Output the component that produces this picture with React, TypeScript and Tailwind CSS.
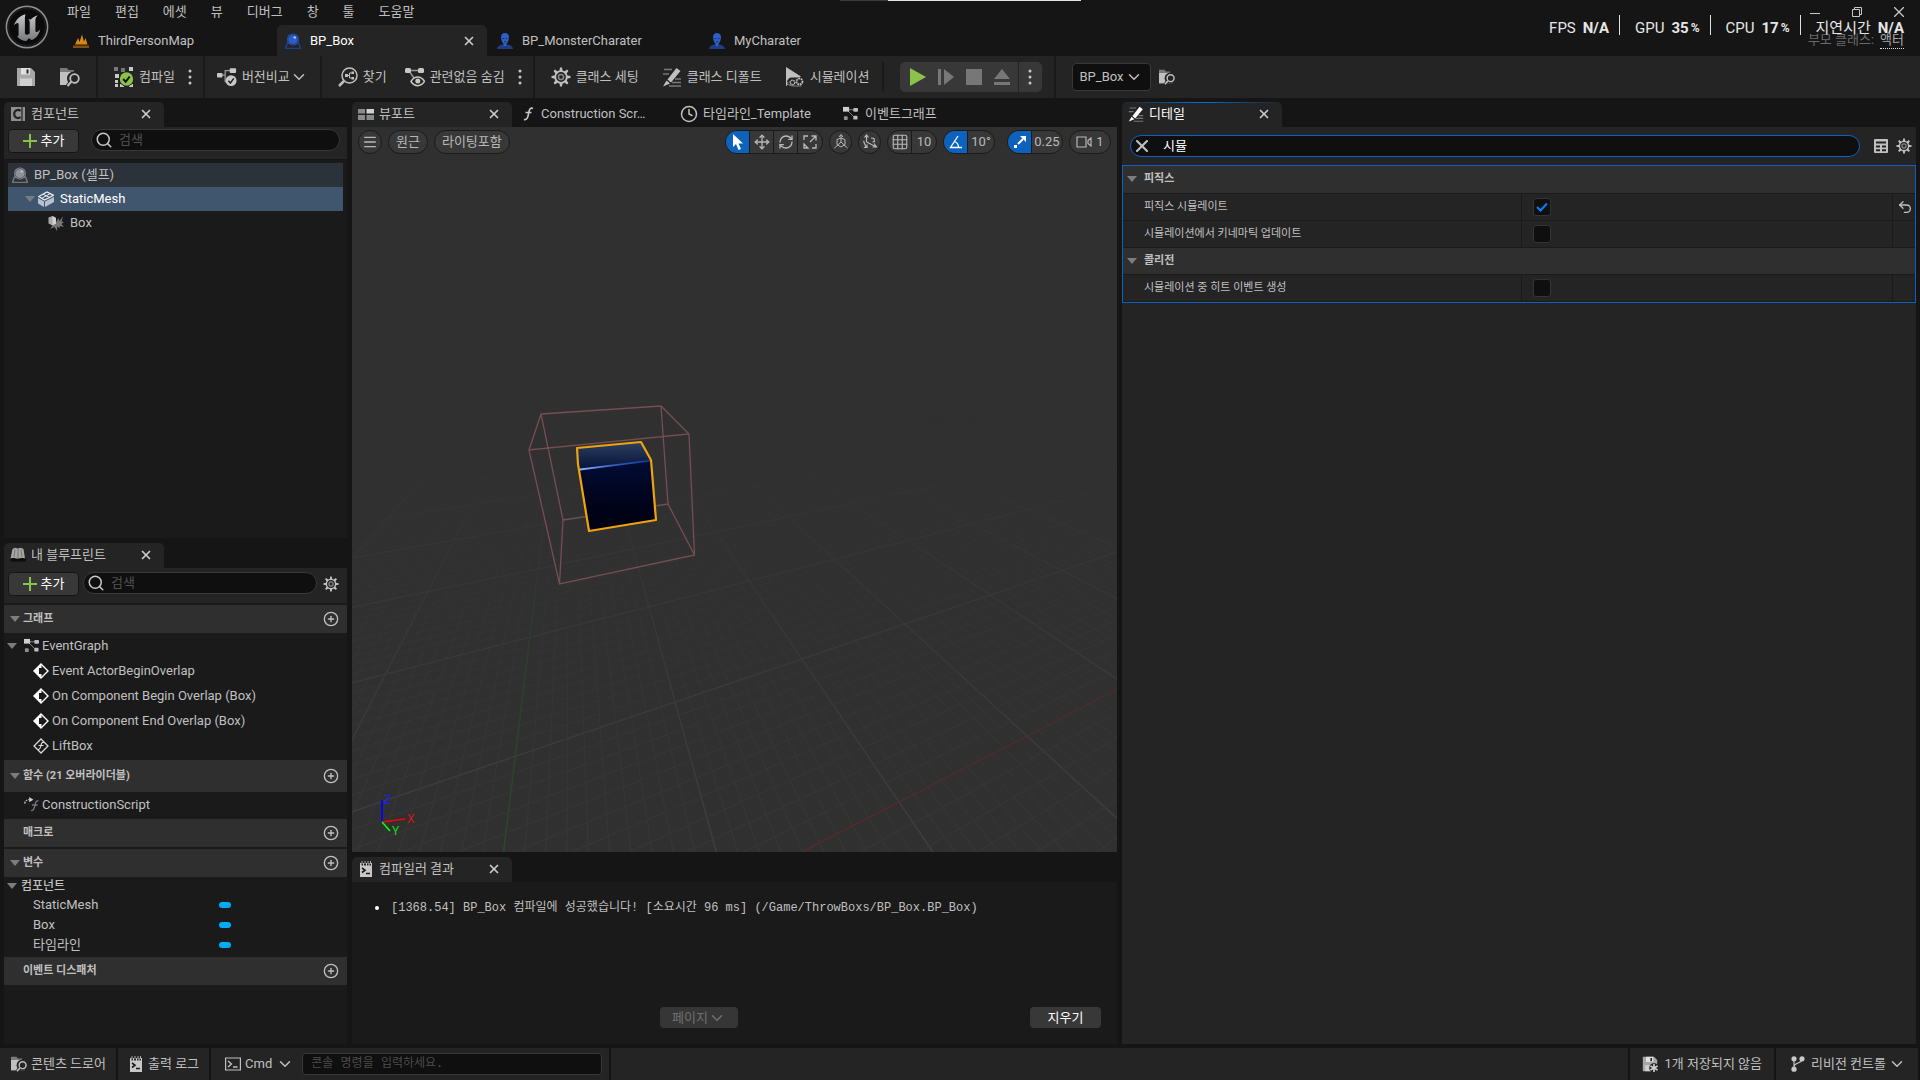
import { useState } from "react"
import type { ReactNode } from "react"
import clsx from "clsx"
import { ChevronDown, CirclePlus, Clock, Grid3x3, Menu, Move, RefreshCw, Search, Undo2, X } from "lucide-react"

type IconProps = { className?: string }

/* ---------- icons ---------- */

function UnrealLogo() {
  return (
    <svg viewBox="0 0 44 44" className="size-11">
      <defs>
        <linearGradient id="ueFill" x1="0" y1="0" x2="0" y2="1">
          <stop offset="0" stopColor="#c4c6c8" />
          <stop offset="1" stopColor="#77797b" />
        </linearGradient>
      </defs>
      <circle cx="22" cy="22" r="20.6" fill="#0b0b0b" stroke="#8b8d8f" strokeWidth="1.6" />
      <circle cx="22" cy="22" r="18.5" fill="none" stroke="#1c1c1c" strokeWidth="1.5" />
      <path
        fill="url(#ueFill)"
        d="M20.5 9.3c-4.600 1-9.400 4.800-11.700 11.200 1.400-1.700 3.300-2.700 4.200-2.300.6.3.6 1 .6 2v9.300c0 1-.5 1.600-1.300 1.900 2.300 3 6.100 4.600 9 4.500l2.600-2.700 2.700 1.900c4.200-1.700 7.300-5.500 8.600-10.700-1.400 1.500-2.900 2.700-3.900 2.600-.8-.1-.9-.8-.9-1.700V14.900c0-1.600 1-3.300 2.600-4.600-2.900.7-5.500 2.200-7.600 4.500-.7-.5-1.300-.6-2.200-.5 1 .6 1.500 1.500 1.500 2.800v11.300c-1 .9-2 1.300-3 1.300-1.200 0-1.800-.6-1.800-1.900V14.600c-.1-1.700.2-3.800.6-5.300Z"
      />
    </svg>
  )
}

function MapIcon({ className }: IconProps) {
  return (
    <svg viewBox="0 0 16 16" className={className}>
      <path d="M2 11.500 5 5l1.500 4L9 1.500l2 7L12.500 5l2 6.500Z" fill="#d98a12" />
      <rect x="0" y="12.500" width="16" height="2.500" fill="#80500c" />
    </svg>
  )
}

function BlueprintIcon({ className, tone = "blue" }: IconProps & { tone?: "blue" | "gray" }) {
  const [ball, base] = tone === "blue" ? ["#2c5cc5", "#1d3f86"] : ["#8d9196", "#70757a"]
  return (
    <svg viewBox="0 0 16 16" className={className}>
      <path d="M2.500 10 0.500 15.500h15l-2-5.500Z" fill="none" stroke={base} strokeWidth="1.600" />
      <circle cx="8" cy="6.500" r="6" fill={ball} />
      <circle cx="8" cy="6.500" r="5" fill="none" stroke="#00000055" />
      <circle cx="9.800" cy="4.500" r="1.300" fill="#a9c1f5" />
    </svg>
  )
}

function CharacterIcon({ className }: IconProps) {
  return (
    <svg viewBox="0 0 16 16" className={className}>
      <path d="M0 16c.3-3 2.500-4 5.500-4.600h5c3 .6 5.200 1.600 5.500 4.600Z" fill="#1f3d82" />
      <path d="M8 0c2.600 0 4 1.800 4 4.300 0 3-1.500 5.700-2.500 6.500V13h-3v-2.200C5.500 10 4 7.300 4 4.300 4 1.800 5.400 0 8 0Z" fill="#2f5fc6" />
      <path d="M5.500 5.500h1.700M8.800 5.500h1.700M7 8.700h2" stroke="#16306b" />
    </svg>
  )
}

function SaveIcon({ className, star }: IconProps & { star?: boolean }) {
  return (
    <svg viewBox="0 0 20 20" className={className}>
      <path d="M1 1h14l4 4v14H1Z" fill="#a8a8a8" />
      <path d="M5 1h9v6.500H5Z" fill="#e0e0e0" />
      <path d="M10.500 2.500h2v4h-2Z" fill="#242424" />
      <path d="M4 11.500h12V19H4Z" fill="#d0d0d0" />
      {star && (
        <>
          <circle cx="15" cy="15" r="6" fill="#242424" />
          <path d="M15 10v10M10.500 12.500l9 5M19.500 12.500l-9 5" stroke="#d0d0d0" strokeWidth="2" />
        </>
      )}
    </svg>
  )
}

function BrowseIcon({ className }: IconProps) {
  return (
    <svg viewBox="0 0 20 20" className={className}>
      <path d="M0 1h7l1.500 2H14v2H0Z" fill="#7a7a7a" />
      <path d="M0 5h17v13H0Z" fill="#c0c0c0" />
      <circle cx="14" cy="11.500" r="7" fill="#242424" />
      <circle cx="14.500" cy="11.500" r="4.300" fill="none" stroke="#c0c0c0" strokeWidth="1.800" />
      <path d="m11.500 15-4 4" stroke="#242424" strokeWidth="4" />
      <path d="m11.500 14.500-4 4.500" stroke="#c0c0c0" strokeWidth="2" />
    </svg>
  )
}

function CompileIcon({ className }: IconProps) {
  return (
    <svg viewBox="0 0 20 20" className={className}>
      <path d="M0 0h4v4H0ZM7 1h4v4H7Z" fill="#777" />
      <path d="M15 0h4v4h-4ZM1 7h4v4H1ZM1 13h3v3H1ZM6 17h4v3H6ZM1 17h3v3H1ZM15 17h4v3h-4ZM7 7h4v4H7Z" fill="#c8c8c8" />
      <circle cx="12.500" cy="12" r="7.500" fill="#1b1b1b" />
      <circle cx="12.500" cy="12" r="6.700" fill="#8bc24a" />
      <path d="m9.200 12 2.500 2.800 4-5.300" fill="none" stroke="#111" strokeWidth="2" />
    </svg>
  )
}

function DiffIcon({ className }: IconProps) {
  return (
    <svg viewBox="0 0 22 20" className={className}>
      <path d="M5 8h4V3h6M9 8v7h3" fill="none" stroke="#9a9a9a" strokeWidth="1.400" />
      <rect x="0" y="5.500" width="6" height="5" rx="1" fill="#c8c8c8" />
      <rect x="14" y="0.500" width="7" height="5" rx="1" fill="#c8c8c8" />
      <circle cx="15.500" cy="14" r="6" fill="#c8c8c8" />
      <path d="m12.500 14 2.200 2.500 3.800-5" fill="none" stroke="#222" strokeWidth="1.700" />
    </svg>
  )
}

function FindIcon({ className }: IconProps) {
  return (
    <svg viewBox="0 0 20 20" className={className} fill="none" stroke="#c0c0c0">
      <circle cx="11.500" cy="8.500" r="7.500" strokeWidth="1.500" />
      <path d="m6 14-5 5" strokeWidth="2.500" />
      <path d="M9 8.500h2.500V6H14M11.500 8.500V11H14" />
      <path d="M7 7h3v3H7ZM13.500 4.500h2.500v2.500h-2.500ZM13.500 10h2.500v2.500h-2.500Z" fill="#c0c0c0" stroke="none" />
    </svg>
  )
}

function HideIcon({ className }: IconProps) {
  return (
    <svg viewBox="0 0 20 20" className={className}>
      <path d="M4 3.500h12M4 4l5 7" stroke="#999" strokeWidth="1.300" />
      <rect x="0" y="1" width="6" height="5" rx="1.500" fill="#c8c8c8" />
      <rect x="13" y="1" width="6" height="5" rx="1.500" fill="#c8c8c8" />
      <path d="M6 14.500c3.500-6 10-6 13.500 0-3.500 5.500-10 5.500-13.500 0Z" fill="#242424" stroke="#c8c8c8" strokeWidth="1.500" />
      <circle cx="12.800" cy="14" r="2.500" fill="#c8c8c8" />
    </svg>
  )
}

function GearIcon({ className }: IconProps) {
  const teeth = [0, 45, 90, 135, 180, 225, 270, 315]
  return (
    <svg viewBox="0 0 20 20" className={className}>
      {teeth.map((a) => (
        <path key={a} d="M8.300 4.500 9 0.500h2l.7 4Z" fill="#c0c0c0" transform={`rotate(${a} 10 10)`} />
      ))}
      <circle cx="10" cy="10" r="5.800" fill="none" stroke="#c0c0c0" strokeWidth="1.800" />
      <circle cx="10" cy="10" r="2.600" fill="none" stroke="#8a8a8a" strokeWidth="1.500" />
    </svg>
  )
}

function PencilIcon({ className }: IconProps) {
  return (
    <svg viewBox="0 0 20 20" className={className}>
      <path d="M2 2.500h8M1 7h6M13 12h6M10 15.500h9M7 19h12" stroke="#777" strokeWidth="1.400" />
      <path d="m14.500 1 4 3-9.500 11.500-3.500-3Z" fill="currentColor" />
      <path d="m4.500 13.500 3.500 3L1 19.500Z" fill="currentColor" />
    </svg>
  )
}

function SimulateIcon({ className }: IconProps) {
  return (
    <svg viewBox="0 0 20 20" className={className}>
      <path d="M1 0 16 9.500 1 19Z" fill="#c0c0c0" />
      <rect x="2" y="10.500" width="18" height="9.500" rx="4.700" fill="#242424" />
      <circle cx="7.500" cy="15.500" r="2.300" fill="none" stroke="#c0c0c0" strokeWidth="1.400" strokeDasharray="1.500 .6" />
      <circle cx="14.500" cy="14.500" r="3" fill="none" stroke="#c0c0c0" strokeWidth="1.800" strokeDasharray="1.800 .7" />
      <path d="M2.500 15c.5 5 7 4 14 4" fill="none" stroke="#888" />
    </svg>
  )
}

function ViewportIcon({ className }: IconProps) {
  return (
    <svg viewBox="0 0 16 16" className={className}>
      <path d="M0 3h7v4.500H0ZM0 9h7v5H0ZM8.500 9H16v5H8.500Z" fill="#8a8a8a" />
      <path d="M8.500 3H16v4.500H8.500Z" fill="#d0d0d0" />
    </svg>
  )
}

function GraphIcon({ className }: IconProps) {
  return (
    <svg viewBox="0 0 16 16" className={className}>
      <path d="M4 4h9M4 4l8 8" stroke="#888" />
      <path d="M0 1h6.500v5H0Z" fill="#d0d0d0" />
      <rect x="11" y="2" width="5" height="4" rx="1" fill="#bdbdbd" />
      <rect x="11" y="10.500" width="4.500" height="4" rx="1" fill="#bdbdbd" />
      <rect x="1" y="11" width="4" height="4" rx="1" fill="#8f8f8f" />
    </svg>
  )
}

function ComponentsIcon({ className }: IconProps) {
  return (
    <svg viewBox="0 0 14 14" className={className}>
      <path d="M0 0h14v14H0Z" fill="#8f8f8f" />
      <path d="M9.500 4C7.500 2 3.200 3 3.200 7s4.300 5 6.300 3" fill="none" stroke="#242424" strokeWidth="2.200" />
      <path d="M11 0v14" stroke="#242424" strokeWidth="1.200" />
    </svg>
  )
}

function BookIcon({ className }: IconProps) {
  return (
    <svg viewBox="0 0 16 16" className={className}>
      <path d="m0 12 3-1.500L16 11v3.500H1Z" fill="#0d0d0d" />
      <path d="M2.500 2 5 .8l3 .7 3-.7 2.500 1.200L15 11.500c-2.500-.8-4.700-.6-7.500.3-2.500-.9-4.500-.9-7-.3Z" fill="#a5a5a5" />
      <path d="M5 2.500 4 10M8 1.500v9.500M11 2.500l1 7.500" stroke="#777" />
    </svg>
  )
}

function LogIcon({ className }: IconProps) {
  return (
    <svg viewBox="0 0 12 16" className={className}>
      <path d="M0 2h1.500v2.500h1.500V2h1v2.500h2V2h1v2.500h1.500V2h1v2.500h1.500V2H12v14H0Z" fill="#c8c8c8" />
      <path d="M2 0v3M5 0v3M8 0v3M10.500 0v3" stroke="#aaa" />
      <path d="m2 7 3 2.200L2 11.500M6 12.500h4" fill="none" stroke="#1a1a1a" strokeWidth="1.600" />
    </svg>
  )
}

function CmdIcon({ className }: IconProps) {
  return (
    <svg viewBox="0 0 16 14" className={className} fill="none" stroke="#c0c0c0">
      <path d="M.6 1h14.800v12H.6Z" strokeWidth="1.200" />
      <path d="m3 4 3.500 3L3 10M8 10h4.500" strokeWidth="1.400" />
    </svg>
  )
}

function BranchIcon({ className }: IconProps) {
  return (
    <svg viewBox="0 0 14 16" className={className}>
      <path d="M3 3v10M11 3.500c0 4-8 3-8 7" fill="none" stroke="#c0c0c0" strokeWidth="1.200" />
      <circle cx="3" cy="2.800" r="2.600" fill="#c8c8c8" />
      <circle cx="11" cy="2.800" r="2.600" fill="#c8c8c8" />
      <circle cx="3" cy="13.200" r="2.600" fill="#c8c8c8" />
    </svg>
  )
}

function MeshIcon({ className }: IconProps) {
  return (
    <svg viewBox="0 0 16 16" className={className}>
      <path d="m0 7 6 3.500V16l-6-3.500ZM7 10.500 16 6v5l-9 5Z" fill="#b9c2cc" />
      <path d="M.8 5.500 9 1l6.500 3.300L6.500 9Z" fill="none" stroke="#e6ebf0" strokeWidth="1.300" />
      <path d="m5 3.300 6.500 3M3.500 7.500 12 2.700" stroke="#e6ebf0" />
    </svg>
  )
}

function BoxCollisionIcon({ className }: IconProps) {
  return (
    <svg viewBox="0 0 16 16" className={className}>
      <path d="m7 9 3.500-6 .8 3L15 1.500 13.500 6.500 16 7l-2.500 2L16 12l-4-1-.5 2.500L9.500 11 9 16l-2.500-4L2 14l3-4Z" fill="#777" />
      <path d="m.5 2.500 4-1.500 3.500 2v5.500L4.500 10.500l-4-2Z" fill="#a8a8a8" />
      <path d="M4.500 1 8 3v5.500l-3.500 2Z" fill="#d0d0d0" />
    </svg>
  )
}

function EventIcon({ className }: IconProps) {
  return (
    <svg viewBox="0 0 16 16" className={className}>
      <path d="M8 1 15 8 8 15 1 8Z" fill="none" stroke="#fff" strokeWidth="1.400" />
      <path d="M8.500 1v4H6v6h2.500v4L1 8Z" fill="#fff" />
      <path d="M6.500 8h5" stroke="#1a1a1a" strokeWidth="2.500" />
    </svg>
  )
}

function CustomEventIcon({ className }: IconProps) {
  return (
    <svg viewBox="0 0 16 16" className={className} fill="none" stroke="#d8d8d8">
      <path d="M8 1 15 8 8 15 1 8Z" strokeWidth="1.300" />
      <path d="M11 4.500c-2-.8-2.500.5-3 3S7 11.500 5 11.500M5.500 7.500h5" strokeWidth="1.200" />
    </svg>
  )
}

function FunctionIcon({ className, arrow }: IconProps & { arrow?: boolean }) {
  return (
    <svg viewBox="0 0 16 16" className={className} fill="none">
      {arrow ? (
        <>
          <path d="M15.500 4.500c-2-1-3 .3-3.500 3S10.500 15 7.500 14.500M8.500 8.500h6" stroke="#777" strokeWidth="1.500" />
          <path d="M.8 7C1.200 4 3 2.800 6 2.800" stroke="#d0d0d0" strokeWidth="1.300" strokeDasharray="2 1" />
          <path d="m5.500 0 4.500 2.800-4.500 2.700Z" fill="#d0d0d0" />
        </>
      ) : (
        <path d="M13 2.500c-2.500-1.200-3.600.5-4.200 4S7.500 14.500 4 13.500M5.500 6.500h6" stroke="#c8c8c8" strokeWidth="1.600" />
      )}
    </svg>
  )
}

function TableIcon({ className }: IconProps) {
  return (
    <svg viewBox="0 0 14 14" className={className}>
      <rect width="14" height="14" rx="1" fill="#c0c0c0" />
      <path d="M2 2.500h10v2H2ZM2 6.500h4v2H2ZM8 6.500h4v2H8ZM2 10.300h4v2H2ZM8 10.300h4v2H8Z" fill="#242424" />
    </svg>
  )
}

function Dots() {
  return (
    <svg viewBox="0 0 10 18" className="h-4.5 w-2.5" fill="#c8c8c8">
      <circle cx="5" cy="3" r="1.500" />
      <circle cx="5" cy="9" r="1.500" />
      <circle cx="5" cy="15" r="1.500" />
    </svg>
  )
}

function Caret({ className }: IconProps) {
  return (
    <svg viewBox="0 0 10 6" className={clsx("h-1.5 w-2.5 shrink-0", className)}>
      <path d="M0 0h10L5 6Z" fill="#7d7d7d" />
    </svg>
  )
}

function CloseX() {
  return (
    <button aria-label="닫기" className="grid size-4 place-items-center text-[#c8c8c8]">
      <X className="size-3.5" strokeWidth={3} />
    </button>
  )
}

/* ---------- shared parts ---------- */

function PanelTab({ icon, children, focused }: { icon: ReactNode; children: ReactNode; focused?: boolean }) {
  return (
    <div className={clsx("relative flex h-[25px] w-40 shrink-0 items-center overflow-hidden rounded-t-[5px] bg-[#242424] pr-2.5 pb-0.5 pl-1", focused && "text-white")}>
      {focused && <span className="absolute inset-x-0 top-0 h-px bg-linear-to-r from-transparent via-[#0070e0] to-transparent" />}
      <span className="grid w-5 shrink-0 place-items-center">{icon}</span>
      <span className="ml-[3px] flex-1">{children}</span>
      <CloseX />
    </div>
  )
}

function AddButton() {
  return (
    <button className="flex h-6 w-[71px] shrink-0 items-center justify-center gap-1 rounded-sm border border-[#151515] bg-[#383838] text-white">
      <svg viewBox="0 0 14 14" className="size-3.5"><path d="M7 0v14M0 7h14" stroke="#8bc24a" strokeWidth="2" /></svg>
      추가
    </button>
  )
}

function SearchBox({ label }: { label: string }) {
  return (
    <label className="flex h-[22px] min-w-0 flex-1 items-center rounded-full border border-[#383838] bg-[#0f0f0f] pl-[3px]">
      <Search className="size-[18px] shrink-0 text-[#c8c8c8]" />
      <span className="sr-only">{label}</span>
      <input placeholder="검색" className="ml-1.5 h-5 min-w-0 flex-1 bg-transparent leading-5 outline-none placeholder:text-[#505050]" />
    </label>
  )
}

function ToolButton({ icon, children }: { icon: ReactNode; children?: ReactNode }) {
  return <button className="flex items-center gap-[5px] whitespace-nowrap">{icon}{children}</button>
}

function Divider() {
  return <span className="w-0.5 shrink-0 self-stretch bg-[#1a1a1a]" />
}

/* ---------- title bar ---------- */

const MENUS = ["파일", "편집", "에셋", "뷰", "디버그", "창", "툴", "도움말"]

const DOCS = [
  { name: "ThirdPersonMap", icon: <MapIcon className="size-4" /> },
  { name: "BP_Box", icon: <BlueprintIcon className="size-4" />, active: true },
  { name: "BP_MonsterCharater", icon: <CharacterIcon className="size-4" /> },
  { name: "MyCharater", icon: <CharacterIcon className="size-4" /> },
]

function Stat({ label, value, unit, last }: { label: string; value: string; unit?: string; last?: boolean }) {
  return (
    <div className={clsx("flex h-5 items-center pt-1.5 pl-[15px]", last ? "" : "border-r border-[#e0e0e0] pr-2.5")}>
      <span>{label}</span>
      <b className="ml-[7px] font-bold">{value}</b>
      {unit && <b className="ml-0.5 text-[12px]">{unit}</b>}
    </div>
  )
}

function TitleBar() {
  return (
    <header className="relative flex h-14 shrink-0">
      <div className="absolute top-0 left-[840px] flex h-px w-[241px]">
        <span className="w-12 bg-[#3a3a3a]" />
        <span className="flex-1 bg-[#e4e4e4]" />
      </div>
      <div className="w-[65px] shrink-0 pt-[5px] pl-[5px]"><UnrealLogo /></div>
      <div className="flex-1">
        <nav className="flex h-[25px] items-center gap-6 pb-0.5 pl-0.5">
          {MENUS.map((m) => <button key={m}>{m}</button>)}
        </nav>
        <div className="flex h-[31px] gap-0.5">
          {DOCS.map((d) => (
            <div key={d.name} className={clsx("flex w-[210px] items-center gap-[9px] rounded-t-[5px] pr-2.5 pl-2", d.active && "bg-[#242424] text-white")}>
              {d.icon}
              <span className="flex-1">{d.name}</span>
              {d.active && <CloseX />}
            </div>
          ))}
        </div>
      </div>
      <div className="flex flex-col items-end pr-4">
        <div className="flex h-[23px] items-center gap-8 text-[#c8c8c8]">
          <button aria-label="최소화"><svg viewBox="0 0 10 10" className="size-2.5"><path d="M0 6.500h10" stroke="currentColor" /></svg></button>
          <button aria-label="이전 크기로"><svg viewBox="0 0 10 10" className="size-2.5" fill="none" stroke="currentColor"><path d="M.5 2.500h7v7h-7ZM2.500 2.500v-2h7v7h-2" /></svg></button>
          <button aria-label="닫기"><svg viewBox="0 0 10 10" className="size-2.5"><path d="m0 0 10 10M10 0 0 10" stroke="currentColor" strokeWidth="1.300" /></svg></button>
        </div>
        <div className="mt-2 flex h-[18px] items-center gap-1.5 text-[#6a6a6a]">
          부모 클래스:
          <a href="#actor" className="border-b border-dotted border-[#e0e0e0] leading-4 text-[#a8a8a8]">액터</a>
        </div>
      </div>
      <div className="absolute top-[15px] right-4 flex text-[15px] text-[#e6e6e6]">
        <Stat label="FPS" value="N/A" />
        <Stat label="GPU" value="35" unit="%" />
        <Stat label="CPU" value="17" unit="%" />
        <Stat label="지연시간" value="N/A" last />
      </div>
    </header>
  )
}

/* ---------- toolbar ---------- */

function Toolbar() {
  return (
    <div className="flex h-[42px] shrink-0 items-center bg-[#242424]">
      <div className="flex gap-6 px-4">
        <button aria-label="저장"><SaveIcon className="size-5" /></button>
        <button aria-label="찾아보기"><BrowseIcon className="size-5" /></button>
      </div>
      <Divider />
      <div className="flex items-center gap-2.5 pr-2 pl-4">
        <ToolButton icon={<CompileIcon className="size-5" />}>컴파일</ToolButton>
        <button aria-label="컴파일 옵션"><Dots /></button>
      </div>
      <Divider />
      <div className="flex items-center pr-3 pl-3">
        <ToolButton icon={<DiffIcon className="h-5 w-5" />}>버전비교</ToolButton>
        <ChevronDown className="size-[18px]" />
      </div>
      <Divider />
      <div className="flex items-center pr-2 pl-4">
        <ToolButton icon={<FindIcon className="size-5" />}>찾기</ToolButton>
        <span className="w-4.5" />
        <ToolButton icon={<HideIcon className="size-5" />}>관련없음 숨김</ToolButton>
        <span className="w-2.5" />
        <button aria-label="숨김 옵션"><Dots /></button>
      </div>
      <Divider />
      <div className="flex items-center gap-[23px] pr-3 pl-4">
        <ToolButton icon={<GearIcon className="size-5" />}>클래스 세팅</ToolButton>
        <ToolButton icon={<PencilIcon className="size-5" />}>클래스 디폴트</ToolButton>
        <ToolButton icon={<SimulateIcon className="size-5" />}>시뮬레이션</ToolButton>
      </div>
      <span className="h-[30px] w-0.5 bg-[#1a1a1a]" />
      <div className="mr-3 ml-4 flex h-[30px] items-stretch rounded-[5px] bg-[#383838] pl-1">
        <button aria-label="플레이" className="grid w-7 place-items-center"><svg viewBox="0 0 16 18" className="h-[18px] w-4"><path d="M0 0 16 9 0 18Z" fill="#8bc24a" /></svg></button>
        <button aria-label="프레임 건너뛰기" className="grid w-7 place-items-center"><svg viewBox="0 0 16 18" className="h-[18px] w-4" fill="#777"><path d="M0 1h3v16H0ZM6 1l10 8-10 8Z" /></svg></button>
        <button aria-label="중지" className="grid w-7 place-items-center"><span className="size-4 bg-[#777]" /></button>
        <button aria-label="꺼내기" className="grid w-7 place-items-center"><svg viewBox="0 0 16 16" className="size-4" fill="#777"><path d="m8 0 8 10H0ZM0 13h16v3H0Z" /></svg></button>
        <button aria-label="플레이 옵션" className="ml-0.5 grid w-6 place-items-center border-l border-[#242424]"><Dots /></button>
      </div>
      <Divider />
      <div className="ml-4 flex items-center gap-2">
        <label className="relative flex items-center">
          <span className="sr-only">디버그 오브젝트</span>
          <select className="h-7 w-[79px] appearance-none rounded-sm border border-[#383838] bg-[#0f0f0f] pl-[7px] leading-6">
            <option>BP_Box</option>
          </select>
          <ChevronDown className="pointer-events-none absolute right-2 size-[18px]" />
        </label>
        <button aria-label="오브젝트 찾기"><BrowseIcon className="size-4" /></button>
      </div>
    </div>
  )
}

/* ---------- left column ---------- */

function ComponentsPanel() {
  return (
    <section className="flex min-h-0 flex-[436] flex-col">
      <PanelTab icon={<ComponentsIcon className="size-3.5" />}>컴포넌트</PanelTab>
      <div className="flex h-8 shrink-0 items-start gap-3 bg-[#242424] px-1 pt-0.5 pr-[7px]">
        <AddButton />
        <SearchBox label="컴포넌트 검색" />
      </div>
      <ul className="flex-1 border-t border-[#151515] bg-[#1a1a1a] px-1 pt-[3px]">
        <li className="flex h-6 items-center gap-1.5 bg-[#2b323a] pl-1"><BlueprintIcon tone="gray" className="size-4" />BP_Box (셀프)</li>
        <li className="flex h-6 items-center bg-[#40566f] pl-[17px] text-white"><Caret /><MeshIcon className="mr-1.5 ml-[3px] size-4" />StaticMesh</li>
        <li className="flex h-6 items-center gap-1.5 pl-10"><BoxCollisionIcon className="size-4" />Box</li>
      </ul>
    </section>
  )
}

function SectionHeader({ children, open }: { children: ReactNode; open?: boolean }) {
  return (
    <div className="flex h-7 items-center bg-[#2f2f2f] pr-2 pl-1.5 text-[11px] font-bold">
      <span className="w-[13px]">{open && <Caret />}</span>
      <h3 className="flex-1">{children}</h3>
      <button aria-label="추가"><CirclePlus className="size-4" strokeWidth={2} /></button>
    </div>
  )
}

const EVENTS = ["Event ActorBeginOverlap", "On Component Begin Overlap (Box)", "On Component End Overlap (Box)"]
const VARIABLES = ["StaticMesh", "Box", "타임라인"]

function MyBlueprintPanel() {
  return (
    <section className="flex min-h-0 flex-[501] flex-col">
      <PanelTab icon={<BookIcon className="size-4" />}>내 블루프린트</PanelTab>
      <div className="flex h-[35px] shrink-0 items-start gap-1 bg-[#242424] px-1 pt-1">
        <AddButton />
        <SearchBox label="내 블루프린트 검색" />
        <button aria-label="설정" className="mt-1 mr-1 ml-0.5"><GearIcon className="size-4" /></button>
      </div>
      <div className="flex-1 overflow-hidden bg-[#1a1a1a] pt-0.5">
        <SectionHeader open>그래프</SectionHeader>
        <ul>
          <li className="flex h-[25px] items-center pl-[3px]"><Caret className="mr-[7px]" /><GraphIcon className="mr-[3px] size-[15px]" />EventGraph</li>
          {EVENTS.map((e) => (
            <li key={e} className="flex h-[25px] items-center gap-[3px] pl-[29px]"><EventIcon className="size-4" />{e}</li>
          ))}
          <li className="flex h-[25px] items-center gap-[3px] pl-[29px]"><CustomEventIcon className="size-4" />LiftBox</li>
        </ul>
        <div className="mt-0.5 bg-[#2f2f2f] py-0.5"><SectionHeader open>함수 (21 오버라이더블)</SectionHeader></div>
        <div className="flex h-[27px] items-center gap-[3px] pb-0.5 pl-5"><FunctionIcon arrow className="size-[15px]" />ConstructionScript</div>
        <SectionHeader>매크로</SectionHeader>
        <div className="mt-0.5"><SectionHeader open>변수</SectionHeader></div>
        <div className="flex h-[18px] items-center gap-1 pl-[3px] text-[12px] font-medium"><Caret />컴포넌트</div>
        <ul className="pb-0.5">
          {VARIABLES.map((v) => (
            <li key={v} className="flex h-5 items-center pl-[29px]">
              <span className="w-[186px]">{v}</span>
              <span className="h-1.5 w-3 rounded-[3px] bg-[#00aaf5]" />
            </li>
          ))}
        </ul>
        <SectionHeader>이벤트 디스패처</SectionHeader>
      </div>
    </section>
  )
}

/* ---------- viewport ---------- */

// projects a point of the ground plane; one unit is one major grid cell
function project(u: number, v: number) {
  const w = 1 + 0.1035 * u - 0.294 * v
  const x = (802 + 196.7 * u - 167.3 * v) / w
  const y = (659 + 29.6 * u - 92.8 * v) / w
  return { x: Math.round(x * 10) / 10, y: Math.round(y * 10) / 10 }
}

function gridLines() {
  const lines: { key: string; a: { x: number; y: number }; b: { x: number; y: number }; color: string; width: number }[] = []
  for (let i = -40; i <= 40; i++) {
    const major = i % 10 === 0
    const color = i === -20 ? "#2b4a2d" : major ? "#3f3f3f" : "#383838"
    lines.push({ key: `u${i}`, a: project(i / 10, -9), b: project(i / 10, 1.9), color, width: major ? 1.5 : 1 })
  }
  for (let i = -50; i <= 19; i++) {
    const major = i % 10 === 0
    const color = i === 10 ? "#552b2d" : major ? "#3f3f3f" : "#383838"
    lines.push({ key: `v${i}`, a: project(-4, i / 10), b: project(8, i / 10), color, width: major ? 1.5 : 1 })
  }
  return lines
}

function Scene() {
  return (
    <svg viewBox="352 127 765 725" preserveAspectRatio="xMidYMid slice" className="absolute inset-0 size-full">
      <defs>
        <linearGradient id="fade" x1="0" y1="0" x2="0" y2="1">
          <stop offset="0.400" stopColor="#000" />
          <stop offset="0.700" stopColor="#888" />
          <stop offset="1" stopColor="#fff" />
        </linearGradient>
        <mask id="ground" maskUnits="userSpaceOnUse" x="352" y="127" width="765" height="725">
          <rect x="352" y="127" width="765" height="725" fill="url(#fade)" />
        </mask>
        <linearGradient id="lid" x1="0" y1="0" x2="0" y2="1">
          <stop offset="0" stopColor="#2c405e" />
          <stop offset="1" stopColor="#06133a" />
        </linearGradient>
        <linearGradient id="front" x1="0" y1="0" x2="0" y2="1">
          <stop offset="0" stopColor="#020d36" />
          <stop offset="0.600" stopColor="#00031a" />
          <stop offset="1" stopColor="#000010" />
        </linearGradient>
        <linearGradient id="edge">
          <stop offset="0" stopColor="#8fb4ff" />
          <stop offset="0.500" stopColor="#2e5cc4" />
          <stop offset="1" stopColor="#14409c" />
        </linearGradient>
      </defs>
      <g mask="url(#ground)">
        {gridLines().map((l) => (
          <line key={l.key} x1={l.a.x} y1={l.a.y} x2={l.b.x} y2={l.b.y} stroke={l.color} strokeWidth={l.width} />
        ))}
      </g>
      <g fill="none" stroke="#744e52" strokeWidth="1.300">
        <path d="M541 414 661 406 689 434 529 450ZM563 520 668 504 694.500 555 559.500 584ZM541 414 563 520M661 406 668 504M689 434 694.500 555M529 450 559.500 584" />
      </g>
      <path d="M577 448 641 442 651 460 579 469Z" fill="url(#lid)" />
      <path d="M579 469 651 460 656 520 589 531Z" fill="url(#front)" />
      <path d="M580 468.500 650 460v1.500L580 470.500Z" fill="url(#edge)" />
      <path d="M577 448 641 442 651 460 656 520 589 531 578 464Z" fill="none" stroke="#f0a30f" strokeWidth="2.200" strokeLinejoin="round" />
      <g fill="none" strokeWidth="1.700">
        <path d="M382 822v-22" stroke="#00f" />
        <path d="m382 822 23-3" stroke="#f00" />
        <path d="m382 822 8 9" stroke="#0f0" />
      </g>
      <g fontFamily="Roboto, sans-serif" fontSize="12">
        <text x="384" y="804" fill="#1c1cff">Z</text>
        <text x="407" y="823" fill="#d81414">X</text>
        <text x="392" y="835" fill="#14d814">Y</text>
      </g>
    </svg>
  )
}

function Pill({ children, className }: { children: ReactNode; className?: string }) {
  return (
    <div className={clsx("flex h-6 items-stretch overflow-hidden rounded-full border border-[#1a1a1a] bg-[#383838] text-[#b8b8b8]", className)}>
      {children}
    </div>
  )
}

function PillButton({ children, label, on, className }: { children: ReactNode; label: string; on?: boolean; className?: string }) {
  return (
    <button aria-label={label} className={clsx("grid place-items-center", on && "bg-[#0d62bd] text-white", className ?? "w-6")}>
      {children}
    </button>
  )
}

function ViewportToolbar() {
  return (
    <div className="relative flex items-center justify-between px-1.5 pt-[3px]">
      <div className="flex gap-1.5">
        <Pill className="w-6 justify-center"><PillButton label="뷰포트 옵션"><Menu className="size-4" /></PillButton></Pill>
        <Pill><button className="px-[7px]">원근</button></Pill>
        <Pill><button className="px-[7px]">라이팅포함</button></Pill>
      </div>
      <div className="flex gap-1.5">
        <Pill className="divide-x divide-[#1a1a1a]">
          <PillButton label="선택" on>
            <svg viewBox="0 0 12 16" className="h-4 w-3"><path d="M1 0v13l3-3 2.500 6 2.500-1-2.500-5.500H11Z" fill="#fff" /></svg>
          </PillButton>
          <PillButton label="이동"><Move className="size-4" /></PillButton>
          <PillButton label="회전"><RefreshCw className="size-4" /></PillButton>
          <PillButton label="스케일">
            <svg viewBox="0 0 14 14" className="size-3.5" fill="none" stroke="currentColor" strokeWidth="1.300"><path d="M1 5V1h4M9 13h4V9M7 7l5.500-5.500M8.500 1H13v4.500M1 9v4h4Z" /></svg>
          </PillButton>
        </Pill>
        <Pill>
          <PillButton label="로컬 좌표계" className="w-[21px]">
            <svg viewBox="0 0 16 16" className="size-4" fill="none" stroke="currentColor"><path d="M8 1v7M8 8l-6.500 6M8 8l6.500 6M6 3l2-2.500L10 3M4 5.500 8 4l4 1.500v5L8 13l-4-2.500Z" /></svg>
          </PillButton>
        </Pill>
        <Pill>
          <PillButton label="표면 스냅" className="w-[21px]">
            <svg viewBox="0 0 16 16" className="size-4" fill="none" stroke="currentColor" strokeWidth="1.200"><path d="M4.500 8V1.500M2.500 3.500l2-2.500 2 2.500M4.500 8l9 4.500M12 9.500l2.500 3.500H10.500M1.500 7l2.500 6M2 13.500h3V10.500M9 4l3 .5.500 3-2 .5" /></svg>
          </PillButton>
        </Pill>
        <Pill className="divide-x divide-[#1a1a1a]">
          <PillButton label="그리드 스냅"><Grid3x3 className="size-[18px]" strokeWidth={1.5} /></PillButton>
          <button className="w-6 text-center">10</button>
        </Pill>
        <Pill className="divide-x divide-[#1a1a1a]">
          <PillButton label="회전 스냅" on>
            <svg viewBox="0 0 14 14" className="size-3.5" fill="none" stroke="#fff" strokeWidth="1.300"><path d="M9 1 1.500 12.500H13M5.500 6.500c3 1 4 3 4 6" /></svg>
          </PillButton>
          <button className="w-[26px] text-center">10°</button>
        </Pill>
        <Pill className="ml-1.5 divide-x divide-[#1a1a1a]">
          <PillButton label="스케일 스냅" on>
            <svg viewBox="0 0 14 14" className="size-3.5"><path d="M5 9l5-5" stroke="#fff" strokeWidth="2" /><path d="M7 1h6v6ZM1 10h3v3H1Z" fill="#fff" /></svg>
          </PillButton>
          <button className="w-[30px] text-center">0.25</button>
        </Pill>
        <Pill>
          <button className="flex w-10 items-center justify-center gap-1">
            <svg viewBox="0 0 16 12" className="h-3 w-4" fill="none" stroke="currentColor" strokeWidth="1.200"><path d="M1 1h9v10H1ZM12 4.500l3-2.500v8l-3-2.500Z" /></svg>
            1
          </button>
        </Pill>
      </div>
    </div>
  )
}

function ViewportPanel() {
  return (
    <section className="flex min-h-0 flex-1 flex-col">
      <div className="flex h-[25px] shrink-0 items-center">
        <PanelTab icon={<ViewportIcon className="size-4" />}>뷰포트</PanelTab>
        <div className="ml-2 flex w-[152px] items-center gap-[5px] pb-0.5"><FunctionIcon className="size-4" />Construction Scr…</div>
        <div className="ml-2 flex w-[155px] items-center gap-[5px] pb-0.5"><Clock className="size-[18px]" />타임라인_Template</div>
        <div className="ml-2 flex items-center gap-[7px] pb-0.5"><GraphIcon className="size-[15px]" />이벤트그래프</div>
      </div>
      <div className="relative flex-1 overflow-hidden bg-[#303030]">
        <Scene />
        <ViewportToolbar />
      </div>
    </section>
  )
}

function CompilerPanel() {
  return (
    <section className="flex h-[187px] shrink-0 flex-col">
      <PanelTab icon={<LogIcon className="h-4 w-3" />}>컴파일러 결과</PanelTab>
      <div className="flex flex-1 flex-col justify-between bg-[#1a1a1a] pt-4 pb-4">
        <ul className="font-['Liberation_Mono','Noto_Sans_CJK_KR',monospace] text-[12px] leading-5">
          <li className="flex items-center gap-3 pl-[23px] whitespace-pre">
            <span className="size-1 rounded-full bg-white" />
            [1368.54] BP_Box 컴파일에 성공했습니다! [소요시간 96 ms] (/Game/ThrowBoxs/BP_Box.BP_Box)
          </li>
        </ul>
        <div className="flex items-center pr-4 pl-4">
          <div className="flex flex-1 justify-center">
            <button disabled className="flex h-[21px] w-[78px] items-center justify-center rounded-sm bg-[#363636] text-[#6f6f6f]">
              페이지<ChevronDown className="size-[18px]" />
            </button>
          </div>
          <button className="h-[21px] w-[71px] rounded-sm bg-[#383838] text-white">지우기</button>
        </div>
      </div>
    </section>
  )
}

/* ---------- details ---------- */

function CategoryRow({ title }: { title: string }) {
  return (
    <tr className="h-[27px] border-b border-[#1a1a1a] bg-[#2f2f2f]">
      <th colSpan={3} className="pl-1 text-left font-bold">
        <span className="flex items-center gap-[7px]"><Caret />{title}</span>
      </th>
    </tr>
  )
}

function PropertyRow({ id, label, initial }: { id: string; label: string; initial?: boolean }) {
  const [on, setOn] = useState(!!initial)
  return (
    <tr className="h-[27px] border-b border-[#1a1a1a]">
      <td className="border-r border-[#1a1a1a] pl-[21px]"><label htmlFor={id}>{label}</label></td>
      <td className="pl-[11px]">
        <span className="relative grid size-[18px] place-items-center">
          <input id={id} type="checkbox" checked={on} onChange={(e) => setOn(e.target.checked)} className="size-[18px] appearance-none rounded-[3px] border border-[#343434] bg-[#0f0f0f]" />
          {on && (
            <svg viewBox="0 0 12 10" className="pointer-events-none absolute h-2.5 w-3"><path d="m1 5 3.500 3.500L11 1.500" fill="none" stroke="#0a7cf0" strokeWidth="2.200" /></svg>
          )}
        </span>
      </td>
      <td className="border-l border-[#1a1a1a] pl-1">
        {initial && <button aria-label="기본값으로 리셋" className="block"><Undo2 className="size-4" /></button>}
      </td>
    </tr>
  )
}

function DetailsPanel() {
  const [query, setQuery] = useState("시뮬")
  return (
    <section className="flex w-[794px] shrink-0 flex-col">
      <PanelTab focused icon={<PencilIcon className="size-4" />}>디테일</PanelTab>
      <div className="flex-1 bg-[#242424]">
        <div className="flex h-[38px] items-center gap-2 pr-1 pl-2">
          <div className="mr-1.5 flex h-[22px] flex-1 items-center rounded-full border border-[#0d62bd] bg-[#0f0f0f] pl-px">
            <button aria-label="검색 지우기" onClick={() => setQuery("")}><X className="size-5" strokeWidth={2.5} /></button>
            <input aria-label="디테일 검색" value={query} onChange={(e) => setQuery(e.target.value)} className="ml-[11px] h-5 flex-1 bg-transparent leading-5 text-white outline-none" />
          </div>
          <button aria-label="프로퍼티 매트릭스"><TableIcon className="size-3.5" /></button>
          <button aria-label="디테일 설정"><GearIcon className="size-4" /></button>
        </div>
        <div className="border border-[#0d62bd]">
          <table className="w-full table-fixed border-collapse text-[11px]">
            <colgroup><col className="w-[398px]" /><col /><col className="w-[23px]" /></colgroup>
            <tbody>
              <CategoryRow title="피직스" />
              <PropertyRow id="simulate" label="피직스 시뮬레이트" initial />
              <PropertyRow id="kinematic" label="시뮬레이션에서 키네마틱 업데이트" />
              <CategoryRow title="콜리전" />
              <PropertyRow id="hit-event" label="시뮬레이션 중 히트 이벤트 생성" />
            </tbody>
          </table>
        </div>
      </div>
    </section>
  )
}

/* ---------- status bar ---------- */

function StatusBar() {
  return (
    <footer className="flex h-8 shrink-0 items-stretch gap-0.5 pr-0.5 *:bg-[#242424]">
      <button className="flex items-center gap-1 pr-2.5 pl-[11px]"><BrowseIcon className="size-4" />콘텐츠 드로어</button>
      <button className="flex items-center gap-1.5 pr-2.5 pl-3"><LogIcon className="h-4 w-3" />출력 로그</button>
      <div className="flex items-center pr-[7px] pl-3.5">
        <button className="flex items-center gap-1"><CmdIcon className="h-3.5 w-4" />Cmd<ChevronDown className="size-[18px]" /></button>
        <input
          aria-label="콘솔 명령"
          placeholder="콘솔 명령을 입력하세요."
          className="ml-2 h-[22px] w-[300px] rounded-[3px] border border-[#383838] bg-[#0f0f0f] pl-2 font-['Liberation_Mono','Noto_Sans_CJK_KR',monospace] text-[12px] outline-none placeholder:text-[#4c4c4c]"
        />
      </div>
      <span className="flex-1" />
      <button className="flex items-center gap-[7px] pr-3 pl-3"><SaveIcon star className="size-4" />1개 저장되지 않음</button>
      <button className="flex items-center gap-1.5 pr-3 pl-[15px]"><BranchIcon className="h-4 w-3.5" /><span>리비전 컨트롤</span><ChevronDown className="-ml-1 size-[18px]" /></button>
    </footer>
  )
}

export default function App() {
  return (
    <div className="flex h-screen flex-col overflow-hidden bg-[#151515] font-['Roboto','Noto_Sans_CJK_KR',sans-serif] text-[13px] leading-5 text-[#c0c0c0]">
      <TitleBar />
      <Toolbar />
      <main className="flex min-h-0 flex-1 gap-[5px] p-1">
        <div className="flex w-[343px] shrink-0 flex-col gap-[5px]">
          <ComponentsPanel />
          <MyBlueprintPanel />
        </div>
        <div className="flex min-w-0 flex-1 flex-col gap-[5px]">
          <ViewportPanel />
          <CompilerPanel />
        </div>
        <DetailsPanel />
      </main>
      <StatusBar />
    </div>
  )
}
